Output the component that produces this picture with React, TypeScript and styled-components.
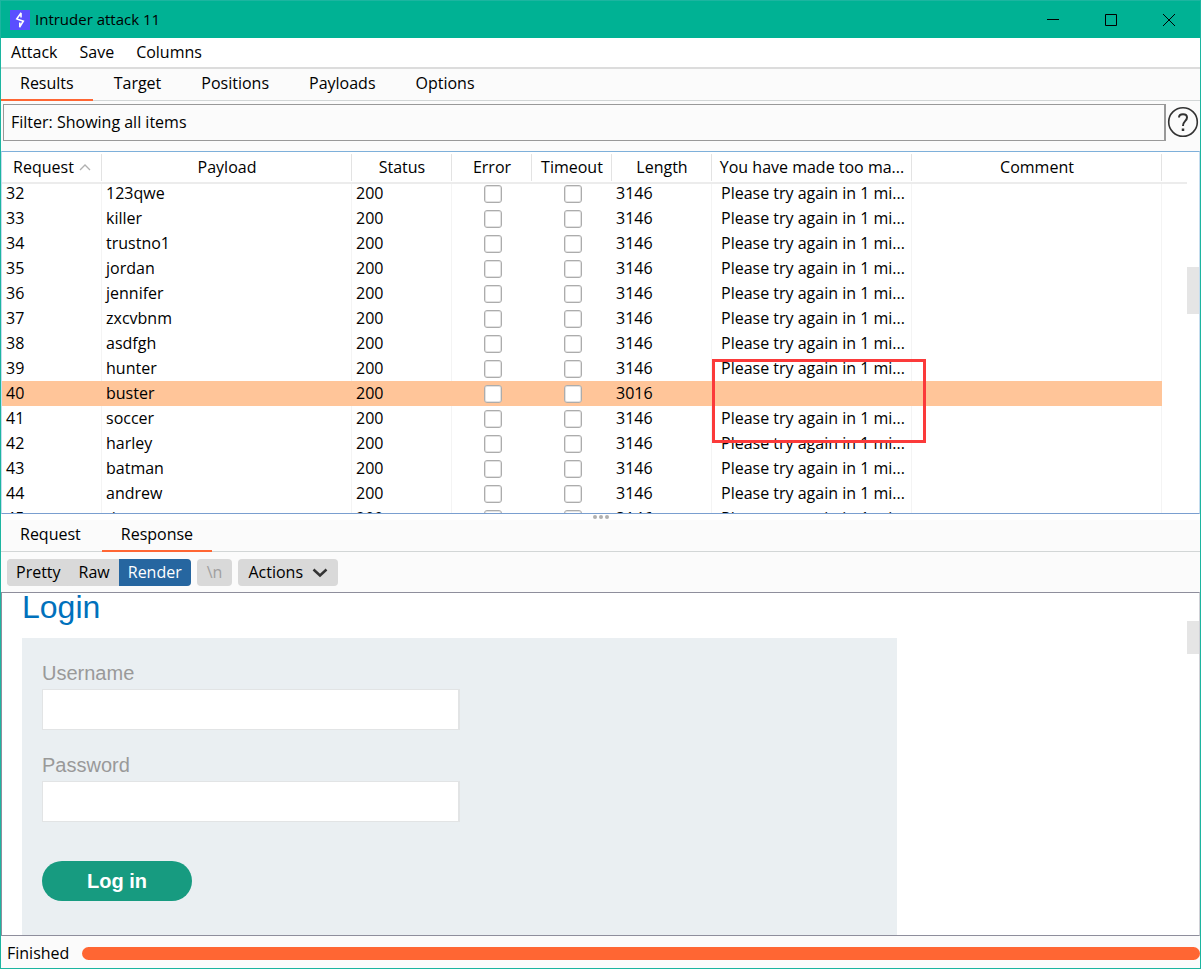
import React from "react";
import styled, { createGlobalStyle, css } from "styled-components";

const GlobalStyle = createGlobalStyle`
  * { box-sizing: border-box; }
  body { margin: 0; background: #fbfbfb; }
  body, button, input, select {
    font-family: "Open Sans", "Noto Sans", sans-serif;
    font-size: 16px;
    color: #000;
  }
  button { border: 0; background: none; padding: 0; }
`;

const Window = styled.main`
  display: flex;
  flex-direction: column;
  height: 100vh;
  min-height: 640px;
  border: 1px solid #1cb5a0;
  background: #fbfbfb;
  line-height: 24px;
  overflow: hidden;
`;

const TitleBar = styled.header`
  display: flex;
  align-items: center;
  flex: none;
  height: 37px;
  padding: 0 2px 0 9px;
  background: #00b294;
`;

const Title = styled.h1`
  flex: 1;
  margin: 0 0 0 5px;
  padding-bottom: 2px;
  font-size: 15px;
  font-weight: 400;
`;

const WindowButton = styled.button`
  display: grid;
  place-items: center;
  width: 58px;
  height: 35px;
`;

const MenuBar = styled.nav`
  display: flex;
  gap: 22px;
  flex: none;
  height: 31px;
  padding: 2px 10px 0;
  background: #fff;
  border-bottom: 2px solid #dcdcdc;
`;

const MenuItem = styled.button`
  height: 24px;
  line-height: 24px;
`;

const TabBar = styled.div`
  display: flex;
  gap: 2px;
  flex: none;
  height: 32px;
  border-bottom: 1px solid #d2d6d6;
`;

const Tab = styled.button<{ $active?: boolean }>`
  height: 32px;
  padding: 0 19px 2px;
  line-height: 24px;
  border-bottom: 2px solid ${(p) => (p.$active ? "#ff6633" : "transparent")};
`;

const FilterRow = styled.div`
  display: flex;
  align-items: center;
  gap: 1px;
  flex: none;
  padding: 3px 1px 10px 2px;
`;

const Filter = styled.button`
  flex: 1;
  height: 37px;
  padding: 0 7px 2px;
  text-align: left;
  border: 1px solid #999;
  border-right-width: 2px;
`;

const HelpButton = styled.button`
  display: grid;
  align-items: start;
  width: 32px;
  height: 34px;
`;

const ResultsPane = styled.section`
  position: relative;
  display: flex;
  flex: 363 1 0;
  min-height: 0;
  border: 1px solid #c5dcee;
  border-top-color: #7eb0da;
  border-bottom-color: #7a9fd0;
  background: #fff;
  overflow: hidden;
`;

const TableArea = styled.div`
  flex: 1;
  min-width: 0;
  overflow: hidden;
`;

const Table = styled.table`
  width: 100%;
  table-layout: fixed;
  border-collapse: separate;
  border-spacing: 0;
`;

const Col = styled.col<{ $w?: number }>`
  ${(p) => p.$w && css`width: ${p.$w}px;`}
`;

const HeadCell = styled.th<{ $last?: boolean }>`
  position: relative;
  height: 29px;
  padding: 0;
  font-weight: 400;
  white-space: nowrap;
  background: ${(p) =>
    p.$last ? "#fff" : "linear-gradient(#e3e3e3, #e3e3e3) right 2px / 1px 100% no-repeat #fff"};
  box-shadow: 0 1px #fff, 0 3px #ececec;
`;

const SortIcon = styled.svg`
  margin-left: 5px;
`;

const Cell = styled.td<{ $line?: boolean; $inset?: number }>`
  height: 25px;
  padding: 0 0 1px ${(p) => p.$inset ?? 4}px;
  line-height: 24px;
  white-space: nowrap;
  border-right: 1px solid ${(p) => (p.$line ? "#f4f4f4" : "transparent")};
`;

const TickCell = styled(Cell)`
  padding: 1px 0 0 3px;
`;

const Row = styled.tr<{ $hit?: boolean }>`
  ${(p) =>
    p.$hit &&
    css`
      ${Cell}:not(:last-child) {
        background: #ffc599;
        border-color: #ffc599;
      }
    `}
`;

const Tick = styled.input`
  display: block;
  appearance: none;
  width: 18px;
  height: 18px;
  margin: 0 auto;
  background: #fff;
  border: 1px solid #acacac;
  border-radius: 3px;
  box-shadow: inset 0 0 0 1px #e2e2e2;
`;

const Track = styled.div`
  flex: none;
  width: 12px;
`;

const Thumb = styled.div<{ $top: number; $size: number }>`
  height: ${(p) => p.$size}px;
  margin-top: ${(p) => p.$top}px;
  background: #e5e5e5;
`;

const Marker = styled.div`
  position: absolute;
  left: 710px;
  top: 207px;
  width: 214px;
  height: 84px;
  border: 3px solid #fb3a3a;
  pointer-events: none;
`;

const Splitter = styled.div`
  display: flex;
  justify-content: center;
  gap: 2px;
  flex: none;
  height: 6px;
  padding-top: 1px;
  background: #fff;
`;

const Dot = styled.i`
  width: 4px;
  height: 4px;
  border-radius: 2px;
  background: #b0b0b0;
`;

const Toolbar = styled.div`
  display: flex;
  align-items: center;
  gap: 6px;
  flex: none;
  height: 40px;
  padding: 1px 6px 0;
`;

const Segments = styled.div`
  display: flex;
  border-radius: 4px;
  overflow: hidden;
  background: #d9d9d9;
`;

const ToolButton = styled.button<{ $on?: boolean }>`
  height: 27px;
  padding: 0 9px;
  line-height: 24px;
  border-radius: ${(p) => (p.$on ? "0" : "4px")};
  background: ${(p) => (p.$on ? "#2666a0" : "#d9d9d9")};
  color: ${(p) => (p.$on ? "#fff" : "#000")};
  &:disabled { color: #a0a0a0; }
`;

const WideToolButton = styled(ToolButton)`
  padding: 0 10px;
`;

const Chevron = styled.svg`
  margin-left: 9px;
`;

const RenderView = styled.section`
  display: flex;
  flex: 344 1 0;
  min-height: 0;
  border: 1px solid #8e8e9c;
  border-right-color: #d0d0d6;
  background: #fff;
  overflow: hidden;
`;

const Page = styled.div`
  flex: 1;
  padding: 0 20px;
  font-family: "Liberation Sans", Arial, sans-serif;
`;

const PageTitle = styled.h2`
  margin: 0 0 17px;
  font-size: 32px;
  font-weight: 400;
  line-height: 28px;
  color: #0071bc;
`;

const LoginForm = styled.form`
  max-width: 875px;
  min-height: 400px;
  padding: 24px 20px;
  background: #eaeff2;
`;

const Label = styled.label`
  display: block;
  font-size: 20px;
  line-height: 22px;
  color: #999;
`;

const TextBox = styled.input`
  display: block;
  width: 100%;
  max-width: 418px;
  height: 41px;
  margin: 5px 0 24px;
  padding: 0 10px;
  font-size: 20px;
  background: #fff;
  border: 1px solid #e2e4e5;
  border-right-width: 2px;
`;

const LoginButton = styled.button`
  width: 150px;
  height: 40px;
  margin-top: 15px;
  padding-top: 1px;
  border-radius: 20px;
  background: #179b80;
  font-family: "Liberation Sans", Arial, sans-serif;
  font-size: 20px;
  font-weight: 700;
  color: #fff;
`;

const StatusBar = styled.footer`
  display: flex;
  align-items: center;
  gap: 13px;
  flex: none;
  height: 32px;
  padding: 2px 0 0 6px;
`;

const Progress = styled.progress`
  flex: 1;
  appearance: none;
  height: 13px;
  border: 0;
  border-radius: 7px;
  overflow: hidden;
  &::-webkit-progress-bar { background: #e0e0e0; }
  &::-webkit-progress-value { background: #ff6633; }
`;

const payloads = [
  "123qwe", "killer", "trustno1", "jordan", "jennifer", "zxcvbnm", "asdfgh",
  "hunter", "buster", "soccer", "harley", "batman", "andrew", "tigger",
];

const results = payloads.map((payload, i) => {
  const hit = payload === "buster";
  return {
    id: 32 + i,
    payload,
    status: 200,
    length: hit ? 3016 : 3146,
    message: hit ? "" : "Please try again in 1 mi...",
    hit,
  };
});

const widths = [100, 250, 100, 80, 80, 100, 200, undefined, 25];

export default function App() {
  return (
    <>
      <GlobalStyle />
      <Window>
        <TitleBar>
          <svg width="20" height="20" viewBox="0 0 20 20" aria-hidden="true">
            <rect width="20" height="20" fill="#5a4fff" />
            <path d="M11.200 2.800 6.800 8.900l6.500 2.300-3.800 6M11 3v4.500M9.800 12.500v4.700" fill="none" stroke="#fff" strokeWidth="1.600" />
          </svg>
          <Title>Intruder attack 11</Title>
          <WindowButton aria-label="Minimize">
            <svg width="12" height="12"><path d="M0 5.500h12" stroke="#000" /></svg>
          </WindowButton>
          <WindowButton aria-label="Maximize">
            <svg width="12" height="12"><path d="M.5.5h11v11H.5z" fill="none" stroke="#000" /></svg>
          </WindowButton>
          <WindowButton aria-label="Close">
            <svg width="12" height="12"><path d="m0 0 12 12M12 0 0 12" stroke="#000" /></svg>
          </WindowButton>
        </TitleBar>

        <MenuBar>
          <MenuItem>Attack</MenuItem>
          <MenuItem>Save</MenuItem>
          <MenuItem>Columns</MenuItem>
        </MenuBar>

        <TabBar>
          <Tab $active>Results</Tab>
          <Tab>Target</Tab>
          <Tab>Positions</Tab>
          <Tab>Payloads</Tab>
          <Tab>Options</Tab>
        </TabBar>

        <FilterRow>
          <Filter>Filter: Showing all items</Filter>
          <HelpButton aria-label="Help">
            <svg width="32" height="32" viewBox="0 0 32 32" fill="none" stroke="#333">
              <circle cx="16" cy="16" r="14.300" strokeWidth="1.600" />
              <path d="M12 11.500c0-4.500 8-4.500 8 0 0 3.500-4 3.500-4 8.500" strokeWidth="2" />
              <path d="M16 22.500v2.500" strokeWidth="2.500" />
            </svg>
          </HelpButton>
        </FilterRow>

        <ResultsPane>
          <TableArea>
            <Table>
              <colgroup>
                {widths.map((w, i) => <Col key={i} $w={w} />)}
              </colgroup>
              <thead>
                <tr>
                  <HeadCell>
                    Request
                    <SortIcon width="12" height="10" viewBox="0 0 12 10" aria-hidden="true">
                      <path d="m1 7 5-5 5 5" fill="none" stroke="#b0b0b0" strokeWidth="1.300" />
                    </SortIcon>
                  </HeadCell>
                  <HeadCell>Payload</HeadCell>
                  <HeadCell>Status</HeadCell>
                  <HeadCell>Error</HeadCell>
                  <HeadCell>Timeout</HeadCell>
                  <HeadCell>Length</HeadCell>
                  <HeadCell>You have made too ma...</HeadCell>
                  <HeadCell>Comment</HeadCell>
                  <HeadCell $last />
                </tr>
              </thead>
              <tbody>
                {results.map((r) => (
                  <Row key={r.id} $hit={r.hit}>
                    <Cell $line>{r.id}</Cell>
                    <Cell $line>{r.payload}</Cell>
                    <Cell $line>{r.status}</Cell>
                    <TickCell><Tick type="checkbox" aria-label={`Error ${r.id}`} /></TickCell>
                    <TickCell><Tick type="checkbox" aria-label={`Timeout ${r.id}`} /></TickCell>
                    <Cell $line>{r.length}</Cell>
                    <Cell $line $inset={9}>{r.message}</Cell>
                    <Cell $line />
                    <Cell />
                  </Row>
                ))}
              </tbody>
            </Table>
          </TableArea>
          <Track><Thumb $top={115} $size={47} /></Track>
          <Marker />
        </ResultsPane>

        <Splitter><Dot /><Dot /><Dot /></Splitter>

        <TabBar>
          <Tab>Request</Tab>
          <Tab $active>Response</Tab>
        </TabBar>

        <Toolbar>
          <Segments>
            <ToolButton>Pretty</ToolButton>
            <ToolButton>Raw</ToolButton>
            <ToolButton $on>Render</ToolButton>
          </Segments>
          <WideToolButton disabled>\n</WideToolButton>
          <WideToolButton>
            Actions
            <Chevron width="16" height="10" viewBox="0 0 16 10" aria-hidden="true">
              <path d="m1.500 1.500 6.500 6 6.500-6" fill="none" stroke="#333" strokeWidth="2.500" />
            </Chevron>
          </WideToolButton>
        </Toolbar>

        <RenderView>
          <Page>
            <PageTitle>Login</PageTitle>
            <LoginForm onSubmit={(e) => e.preventDefault()}>
              <Label htmlFor="username">Username</Label>
              <TextBox id="username" />
              <Label htmlFor="password">Password</Label>
              <TextBox id="password" type="password" />
              <LoginButton>Log in</LoginButton>
            </LoginForm>
          </Page>
          <Track><Thumb $top={28} $size={33} /></Track>
        </RenderView>

        <StatusBar>
          <label htmlFor="progress">Finished</label>
          <Progress id="progress" value={100} max={100} />
        </StatusBar>
      </Window>
    </>
  );
}
